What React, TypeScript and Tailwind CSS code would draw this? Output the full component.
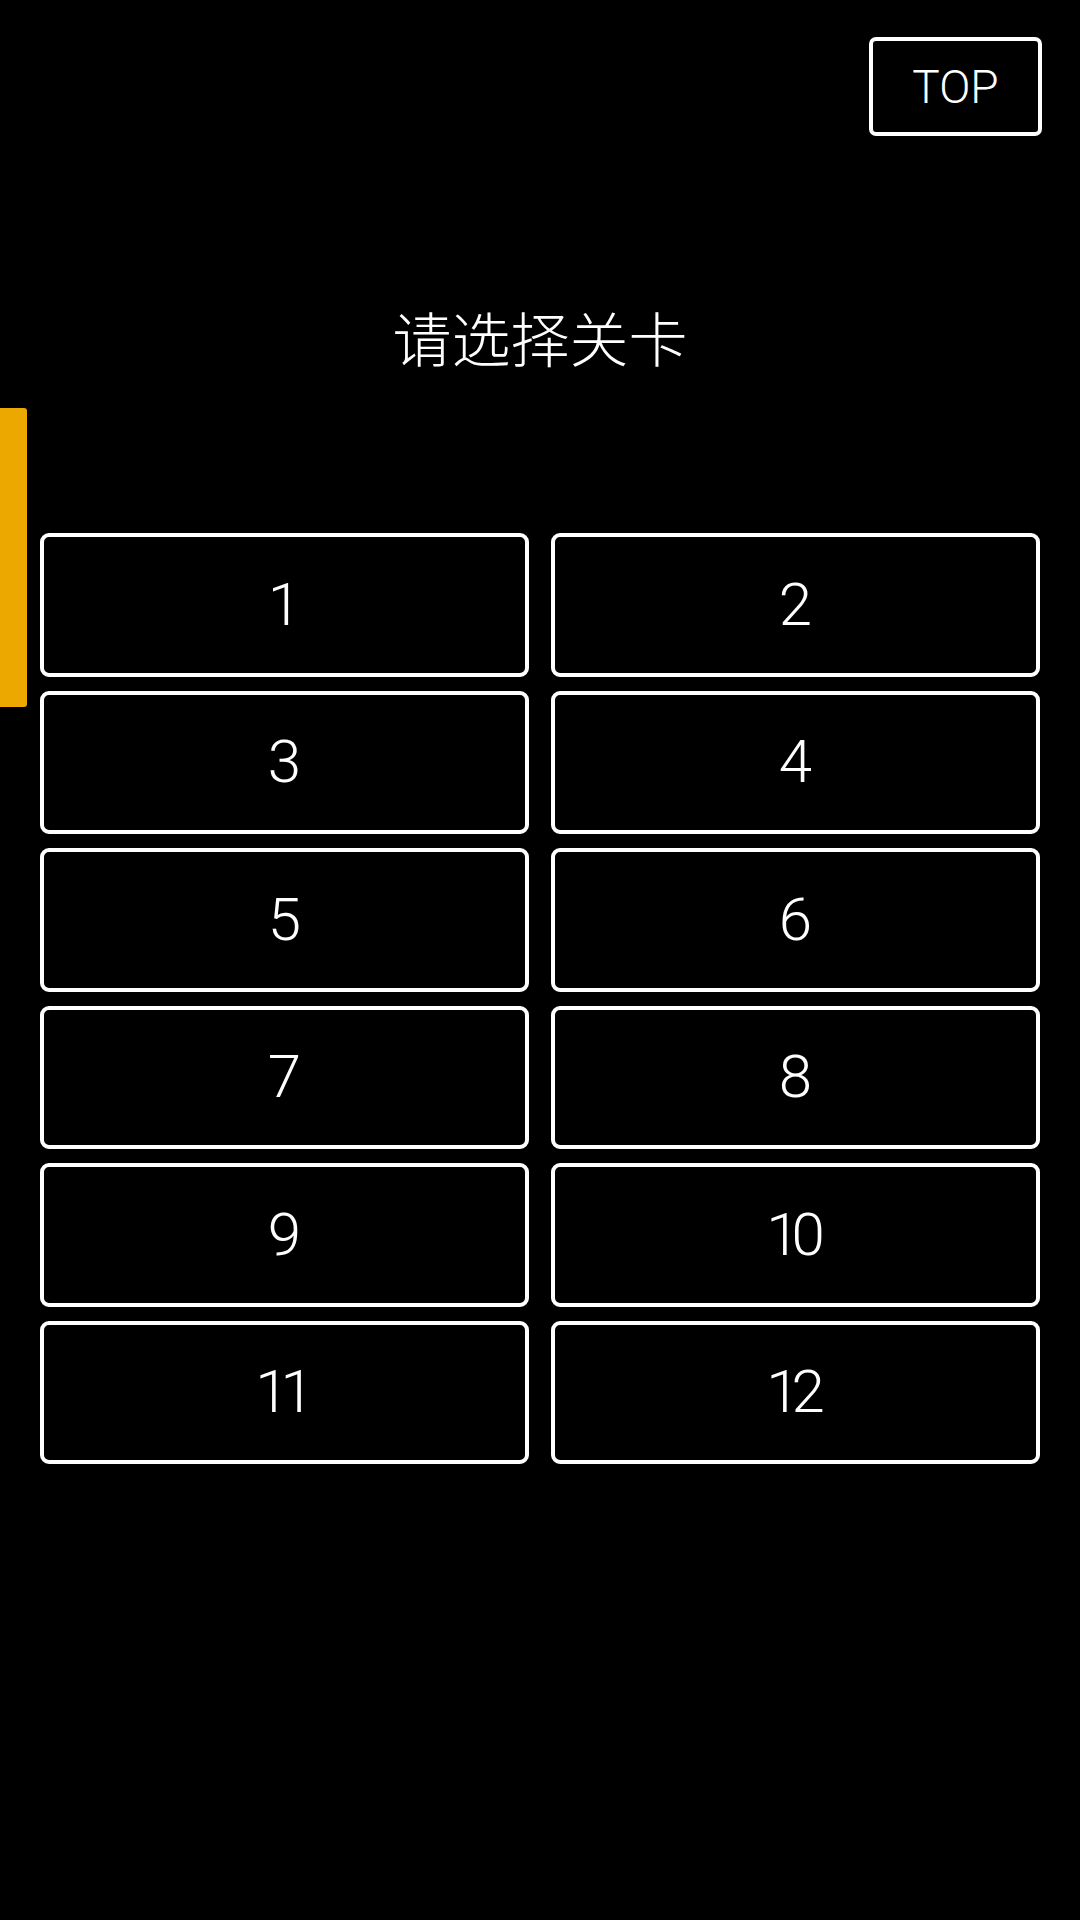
const levels = Array.from({ length: 12 }, (_, i) => i + 1)

const App = () => {
	return (
		<div className="relative h-[1920px] w-[1080px] overflow-hidden bg-black text-white [font-family:Roboto,'Noto_Sans_CJK_SC',sans-serif]">
			<div className="flex justify-end pr-[38px] pt-[37px]">
				<button
					type="button"
					className="flex h-[99px] w-[173px] items-center justify-center rounded-[7px] border-[4px] border-white text-[46px] font-light leading-none"
				>
					TOP
				</button>
			</div>

			<h1 className="mt-[171px] text-center text-[59px] font-light leading-none [font-family:'Noto_Sans_CJK_SC',sans-serif]">
				请选择关卡
			</h1>

			<div className="mt-[167px] grid grid-cols-2 gap-x-[22px] gap-y-[14px] px-[40px]">
				{levels.map((level) => (
					<button
						key={level}
						type="button"
						className={`flex h-[143.5px] items-center justify-center rounded-[9px] border-[4px] border-white text-[60px] font-light leading-none ${
							level >= 10 ? "pr-[8px] tracking-[-8px]" : ""
						}`}
					>
						{level}
					</button>
				))}
			</div>

			{/* side drawer handle */}
			<div className="absolute left-0 top-[408px] h-[299px] w-[27px] rounded-r-[3px] bg-[#eda800]" />
		</div>
	)
}

export default App
